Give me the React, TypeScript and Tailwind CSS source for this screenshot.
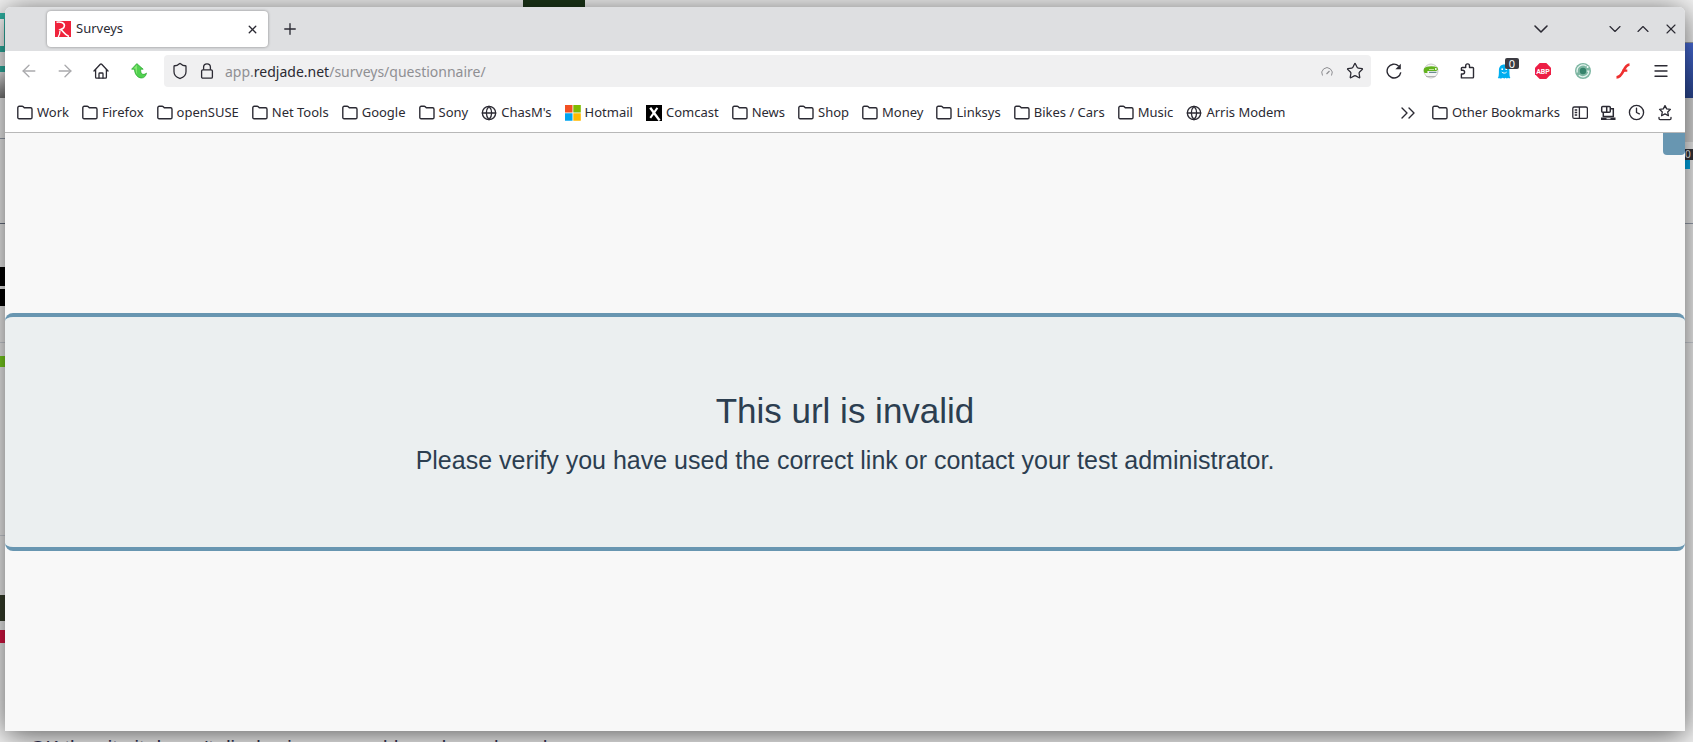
import type { ReactNode } from "react";
import {
  ArrowLeft,
  ArrowRight,
  ChevronDown,
  ChevronUp,
  ChevronsRight,
  Clock,
  Globe,
  Menu,
  Plus,
  Shield,
  Star,
  X,
} from "lucide-react";

type Bookmark = { name: string; kind: "folder" | "globe" | "microsoft" | "comcast" };

const bookmarks: Bookmark[] = [
  { name: "Work", kind: "folder" },
  { name: "Firefox", kind: "folder" },
  { name: "openSUSE", kind: "folder" },
  { name: "Net Tools", kind: "folder" },
  { name: "Google", kind: "folder" },
  { name: "Sony", kind: "folder" },
  { name: "ChasM's", kind: "globe" },
  { name: "Hotmail", kind: "microsoft" },
  { name: "Comcast", kind: "comcast" },
  { name: "News", kind: "folder" },
  { name: "Shop", kind: "folder" },
  { name: "Money", kind: "folder" },
  { name: "Linksys", kind: "folder" },
  { name: "Bikes / Cars", kind: "folder" },
  { name: "Music", kind: "folder" },
  { name: "Arris Modem", kind: "globe" },
];

function FolderIcon() {
  return (
    <svg viewBox="0 0 16 16" className="size-4 shrink-0" fill="none" stroke="currentColor" strokeWidth="1.4">
      <path d="M.8 12.400V2.700c0-.9.6-1.400 1.400-1.400h2.900c.5 0 .9.2 1.200.5l1 1h6.300c.9 0 1.400.6 1.400 1.400v8.200c0 .8-.5 1.300-1.300 1.300H2.100c-.8 0-1.300-.5-1.300-1.300z" />
    </svg>
  );
}

function MicrosoftIcon() {
  return (
    <svg viewBox="0 0 16 16" className="size-4 shrink-0">
      <path fill="#f25022" d="M0 0h7.5v7.5H0z" />
      <path fill="#7fba00" d="M8.3 0h7.5v7.5H8.3z" />
      <path fill="#00a4ef" d="M0 8.3h7.5v7.5H0z" />
      <path fill="#ffb900" d="M8.3 8.3h7.5v7.5H8.3z" />
    </svg>
  );
}

function ComcastIcon() {
  return (
    <svg viewBox="0 0 16 16" className="size-4 shrink-0">
      <path fill="#000" d="M0 0h16v16H0z" />
      <path stroke="#fff" strokeWidth="2.4" d="M4.2 2.8 13.6 15.4" />
      <path stroke="#fff" strokeWidth="2" d="M11.4 2.8 4.3 12.8" />
    </svg>
  );
}

function RedJadeIcon() {
  return (
    <svg viewBox="0 0 16 16" className="size-4 shrink-0" fill="none" stroke="#fff">
      <path fill="#ef233c" stroke="none" d="M0 0h16v16H0z" />
      <path strokeWidth="1.600" d="M1.500 1.200C5.500.5 9.400 1.500 9.400 4.600c0 2-1.600 3.300-3.800 3.900 2.600 1.200 4.200 5.700 8.400 6.900" />
      <path strokeWidth="1.300" d="M5 9.500c0 2.600-.5 4.600-1.800 6.500" />
    </svg>
  );
}

function HomeIcon() {
  return (
    <svg viewBox="0 0 16 16" className="size-4" fill="none" stroke="currentColor" strokeWidth="1.3" strokeLinecap="round" strokeLinejoin="round">
      <path d="M1 8 7.300 1.300a1 1 0 0 1 1.400 0L15 8" />
      <path d="M2.600 6.600v7.600c0 .6.3.9.9.9h9c.6 0 .9-.3.9-.9V6.600" />
      <path d="M6 15v-4.200c0-.5.3-.8.8-.8h2.400c.5 0 .8.3.8.8V15" />
    </svg>
  );
}

function UpIcon() {
  return (
    <svg viewBox="0 0 16 16" className="size-4">
      <path
        fill="#51d14f"
        stroke="#27a52c"
        strokeWidth=".7"
        strokeLinejoin="round"
        d="M5.800.6.600 6.200h2.900c.1 5.200 3.200 8.800 7.200 8.800 2.400 0 4.200-1.900 4.800-4.900-1.600 1.300-3.200 1.600-4.400.9-1.100-.7-1.500-2.300-1.500-4.800h2.600z"
      />
      <path fill="#8de878" d="M5.800 2 2.600 5.500h2c0 2.600.5 4.600 1.600 6C5.700 8.500 6 5 5.800 2z" />
    </svg>
  );
}

function LockIcon() {
  return (
    <svg viewBox="0 0 16 16" className="size-4 shrink-0" fill="none" stroke="currentColor" strokeWidth="1.3">
      <rect x="2.600" y="6.800" width="10.800" height="8.400" rx="1.300" />
      <path d="M4.600 6.800V4.200a3.400 3.400 0 0 1 6.800 0v2.600" />
    </svg>
  );
}

function GaugeIcon() {
  return (
    <svg viewBox="0 0 16 16" className="size-4" fill="none" stroke="#8f8f93">
      <path d="M3.500 12.500A5.200 5.200 0 1 1 12.500 12.500" strokeWidth="1" />
      <path d="m7.500 11 3-3" strokeWidth="1.200" />
    </svg>
  );
}

function ReloadIcon() {
  return (
    <svg viewBox="0 0 16 16" className="size-4" fill="none" stroke="currentColor" strokeWidth="1.400">
      <path d="M14.800 9.300A6.900 6.900 0 1 1 12.600 2.900" />
      <path fill="currentColor" stroke="none" d="M14.800.8v5.500H9.400z" />
    </svg>
  );
}

function SuseIcon() {
  return (
    <svg viewBox="0 0 16 16" className="size-4">
      <circle cx="8" cy="8" r="7" fill="#f5f5f5" stroke="#c8c8c8" />
      <path fill="#62b31e" d="M1 5.500C3.500 3 10 2.700 14.500 4.500l.5 2.200-1.700 1.300H5.200c-1.500 0-1.400 2 .3 2H1.600C.6 9 .5 7 1 5.500z" />
      <path stroke="#d6f0b8" strokeWidth=".8" d="M6 6.500h5" />
      <circle cx="12.800" cy="6" r=".9" fill="#fff" />
      <path stroke="#6b8d91" strokeWidth="1.300" d="M6 9.400h7.500" />
      <path stroke="#b2b2b2" strokeWidth="1" d="M3 13.500h9.500" />
    </svg>
  );
}

function PuzzleIcon() {
  return (
    <svg viewBox="0 0 16 16" className="size-4" fill="none" stroke="currentColor" strokeWidth="1.400" strokeLinejoin="round">
      <path d="M1.400 14.900V11h1.300a1.900 1.900 0 0 0 0-3.800H1.400V5.300c0-.5.3-.8.8-.8h3.500V2.800a1.900 1.900 0 0 1 3.800 0v1.700h3.200c.5 0 .8.3.8.8v8.800c0 .5-.3.8-.8.8z" />
    </svg>
  );
}

function GhostIcon() {
  return (
    <svg viewBox="0 0 16 16" className="size-4">
      <path fill="#00aef0" d="M2.700 15.200c-.7.300-1.300.2-1.900-.3.900-1.100 1.100-3.300 1.100-7.200C1.900 3.500 4 1.500 7.200 1.500s5.200 2 5.200 6.200c0 3.900.2 6.100 1 7.200-.9.500-1.500.5-2.300-.2-.9.900-1.500.9-2.500 0-.9.900-1.700.9-2.700 0-1.200.9-2 1-3.200.5z" />
      <circle cx="5.200" cy="6.200" r=".9" fill="#fff" />
      <circle cx="9.200" cy="6.200" r=".9" fill="#fff" />
      <path d="M4.800 9c1.200 1.500 3.700 1.500 4.900 0" fill="none" stroke="#fff" />
    </svg>
  );
}

function AdblockIcon() {
  return (
    <svg viewBox="0 0 16 16" className="size-4">
      <path fill="#ed1e45" d="M4.700 0h6.600L16 4.700v6.600L11.300 16H4.700L0 11.300V4.700z" />
      <text x="8" y="10.500" textAnchor="middle" fill="#fff" fontSize="7" fontWeight="700" fontFamily="Roboto, sans-serif">
        ABP
      </text>
    </svg>
  );
}

function OrbitIcon() {
  return (
    <svg viewBox="0 0 16 16" className="size-4" fill="none">
      <circle cx="8" cy="8" r="8" fill="#7db6a2" />
      <path stroke="#e4f3ee" strokeWidth="1.300" d="M11.500 3A6 6 0 0 0 2.300 9.500M3.800 12.200a6 6 0 0 0 10-4h-2" />
      <circle cx="8" cy="8" r="3.200" fill="#35836b" />
      <circle cx="12.600" cy="4" r="1" fill="#fff" />
    </svg>
  );
}

function FlashIcon() {
  return (
    <svg viewBox="0 0 16 16" className="size-4" fill="none" stroke="#ee2f2f">
      <path strokeWidth="2.600" d="M14.500 1.600C8 1.800 9 14.200 1.500 14.400" />
      <path strokeWidth="2.200" d="M7.500 7.600h4.800" />
    </svg>
  );
}

function SidebarIcon() {
  return (
    <svg viewBox="0 0 16 16" className="size-4" fill="none" stroke="currentColor" strokeWidth="1.300">
      <rect x=".8" y="2" width="14.600" height="11.400" rx="1.500" />
      <path d="M7.400 2v11.400M2.700 5h2.500M2.700 7.500h2.500M2.700 10h2.500" />
    </svg>
  );
}

function DevicesIcon() {
  return (
    <svg viewBox="0 0 16 16" className="size-4" fill="none" stroke="currentColor" strokeWidth="1.500">
      <rect x="1.700" y="1.600" width="8.600" height="5.600" rx="1" />
      <path d="M6.700 1.600v5.600M3.300 7.500v4h10V3.700h-2.400" />
      <path fill="currentColor" stroke="none" d="M1 12.500h14.500V15H1z" />
      <path stroke="#fff" strokeWidth="1" d="M6.500 13.700h4" />
    </svg>
  );
}

function BookmarkTrayIcon() {
  return (
    <svg viewBox="0 0 16 16" className="size-4" fill="none" stroke="currentColor" strokeWidth="1.300" strokeLinejoin="round" strokeLinecap="round">
      <path d="m8 .6 1.700 3.300 3.700.5-2.700 2.600.7 3.700L8 8.900l-3.400 1.800.7-3.700-2.700-2.600 3.700-.5z" />
      <path d="M2 12.300v1.200c0 .7.4 1.100 1.100 1.100h9.800c.7 0 1.100-.4 1.100-1.100v-1.200" />
    </svg>
  );
}

function BookmarkIcon({ kind }: { kind: Bookmark["kind"] }) {
  if (kind === "microsoft") return <MicrosoftIcon />;
  if (kind === "comcast") return <ComcastIcon />;
  if (kind === "globe") return <Globe className="size-4 shrink-0" strokeWidth={2} />;
  return <FolderIcon />;
}

function IconButton({ label, children, className = "" }: { label: string; children: ReactNode; className?: string }) {
  return (
    <button type="button" aria-label={label} className={`flex h-8 shrink-0 items-center justify-center ${className}`}>
      {children}
    </button>
  );
}

/* Slices of the windows that sit underneath this one */
function Backdrop() {
  return (
    <div aria-hidden="true" className="absolute inset-0 overflow-hidden bg-[#f4f4f4]">
      <div className="absolute left-0 top-[13px] h-[39px] w-[5px] border-y-[6px] border-r border-[#2fb5a5] bg-white" />
      <div className="absolute left-0 top-[66px] h-1.5 w-5 bg-[#2fb5a5]" />
      <div className="absolute left-0 top-[72px] h-[26px] w-5 bg-gradient-to-b from-[#eee] to-[#777]" />
      <div className="absolute left-0 top-[138px] h-px w-5 bg-gray-400" />
      <div className="absolute left-0 top-[223px] h-px w-5 bg-gray-500" />
      <div className="absolute left-0 top-[267px] h-[19px] w-5 bg-black" />
      <div className="absolute left-0 top-[289px] h-[17px] w-5 bg-black" />
      <div className="absolute left-0 top-[342px] h-px w-5 bg-gray-300" />
      <div className="absolute left-0 top-[356px] h-[11px] w-5 bg-[#7cd61f]" />
      <div className="absolute left-0 top-[535px] h-px w-5 bg-gray-300" />
      <div className="absolute left-0 top-[595px] h-[26px] w-5 bg-[#39402c]" />
      <div className="absolute left-0 top-[630px] h-[13px] w-5 bg-[#e21646]" />
      <div className="absolute left-[523px] top-0 h-5 w-[62px] bg-[#1c3618]" />
      <div className="absolute right-0 top-[42px] h-px w-5 bg-gray-400" />
      <div className="absolute right-0 top-[43px] h-[55px] w-5 bg-gradient-to-b from-[#4a6fe0] to-[#2b4791]" />
      <div className="absolute right-0 top-[98px] h-[44px] w-5 bg-[#dcdcdc]" />
      <div className="absolute right-0 top-[149px] h-[11px] w-2 bg-[#35353b] text-[10px] leading-[11px] text-white">0</div>
      <div className="absolute right-[3px] top-[160px] h-[9px] w-[5px] bg-[#00aef0]" />
      <div className="absolute right-0 top-[223px] h-px w-5 bg-gray-400" />
      <div className="absolute right-0 top-[342px] h-px w-5 bg-gray-300" />
      <p className="absolute left-[30px] top-[736px] whitespace-nowrap font-['Liberation_Sans',sans-serif] text-[20px] leading-6 text-[#333355]">
        OK the site it doesn't display in any would you know how do
      </p>
    </div>
  );
}

export default function App() {
  return (
    <div className="relative flex h-screen overflow-hidden pt-[7px] pr-2 pb-[11px] pl-[5px] font-['Noto_Sans',sans-serif] text-[13px] text-[#2b2a33]">
      <Backdrop />
      <div className="relative flex min-w-0 flex-1 flex-col overflow-hidden rounded-t-md bg-[#f8f8f8] shadow-[0_4px_30px_rgba(0,0,0,0.65)]">
        {/* Tab strip */}
        <header className="flex h-11 shrink-0 items-center bg-[#dedfe1]">
          <div className="ml-[42px] flex h-9 w-[221px] items-center gap-[5px] rounded bg-white px-2 shadow-[0_0_3px_rgba(0,0,0,0.4)]">
            <RedJadeIcon />
            <span className="flex-1">Surveys</span>
            <IconButton label="Close tab" className="w-4">
              <X className="size-[13px]" strokeWidth={2.5} />
            </IconButton>
          </div>
          <IconButton label="New tab" className="ml-3 w-5">
            <Plus className="size-[18px]" strokeWidth={1.8} />
          </IconButton>
          <div className="ml-auto flex items-center">
            <IconButton label="List all tabs" className="mr-[46px] w-7">
              <ChevronDown className="size-6" strokeWidth={1.6} />
            </IconButton>
            <IconButton label="Minimize" className="w-7">
              <ChevronDown className="size-5" strokeWidth={1.4} />
            </IconButton>
            <IconButton label="Maximize" className="w-7">
              <ChevronUp className="size-5" strokeWidth={1.4} />
            </IconButton>
            <IconButton label="Close" className="w-7">
              <X className="size-4" strokeWidth={1.7} />
            </IconButton>
          </div>
        </header>

        {/* Navigation bar */}
        <div className="flex h-10 shrink-0 items-center bg-white pr-1.5">
          <div className="flex pl-1.5">
            <IconButton label="Back" className="w-9 text-[#aaaaad]">
              <ArrowLeft className="size-5" strokeWidth={1.6} />
            </IconButton>
            <IconButton label="Forward" className="w-9 text-[#aaaaad]">
              <ArrowRight className="size-5" strokeWidth={1.6} />
            </IconButton>
            <IconButton label="Home" className="w-9">
              <HomeIcon />
            </IconButton>
            <IconButton label="Up one level" className="w-10">
              <UpIcon />
            </IconButton>
          </div>
          <div className="ml-[5px] flex h-8 min-w-0 flex-1 items-center rounded bg-[#f0f0f1] pr-0.5 pl-[7px]">
            <Shield className="size-[18px] shrink-0" strokeWidth={1.7} />
            <span className="ml-2.5 flex">
              <LockIcon />
            </span>
            <div className="ml-2.5 flex-1 truncate text-[14px] text-[#8f8f93]">
              app.<span className="text-[#2b2a33]">redjade.net</span>/surveys/questionnaire/
            </div>
            <IconButton label="Page speed" className="w-7">
              <GaugeIcon />
            </IconButton>
            <IconButton label="Bookmark this page" className="w-7">
              <Star className="size-[18px]" strokeWidth={1.7} />
            </IconButton>
          </div>
          <div className="ml-[5px] flex">
            <IconButton label="Reload" className="w-9">
              <ReloadIcon />
            </IconButton>
            <IconButton label="openSUSE" className="w-[37px]">
              <SuseIcon />
            </IconButton>
            <IconButton label="Extensions" className="w-[37px]">
              <PuzzleIcon />
            </IconButton>
            <IconButton label="Ghostery" className="relative w-[37px]">
              <GhostIcon />
              <span className="absolute top-[3px] right-1 h-[11px] w-3.5 rounded-[2px] bg-[#3b3b42] text-[11px] leading-[11px] text-white">
                0
              </span>
            </IconButton>
            <IconButton label="Adblock Plus" className="w-10">
              <AdblockIcon />
            </IconButton>
            <IconButton label="Privacy" className="w-10">
              <OrbitIcon />
            </IconButton>
            <IconButton label="Flash" className="w-10">
              <FlashIcon />
            </IconButton>
            <IconButton label="Open menu" className="w-9">
              <Menu className="size-[18px]" strokeWidth={1.8} />
            </IconButton>
          </div>
        </div>

        {/* Bookmarks bar */}
        <div className="flex h-[42px] shrink-0 items-center border-b border-[#b8b8b8] bg-white px-3 pt-0.5">
          <nav className="flex items-center gap-[13px]">
            {bookmarks.map((item) => (
              <a key={item.name} href="#" className="flex items-center gap-1 whitespace-nowrap">
                <BookmarkIcon kind={item.kind} />
                {item.name}
              </a>
            ))}
          </nav>
          <div className="ml-auto flex items-center gap-3">
            <IconButton label="More bookmarks">
              <ChevronsRight className="size-6" strokeWidth={1.4} />
            </IconButton>
            <a href="#" className="flex items-center gap-1 whitespace-nowrap">
              <FolderIcon />
              Other Bookmarks
            </a>
            <IconButton label="Sidebars">
              <SidebarIcon />
            </IconButton>
            <IconButton label="Synced devices">
              <DevicesIcon />
            </IconButton>
            <IconButton label="History">
              <Clock className="size-[17px]" strokeWidth={1.9} />
            </IconButton>
            <IconButton label="Bookmarks menu">
              <BookmarkTrayIcon />
            </IconButton>
          </div>
        </div>

        {/* Page */}
        <main className="relative flex flex-1 flex-col justify-center font-['Liberation_Sans',sans-serif] text-[#2c3e50]">
          <div className="absolute top-0 right-0 size-[22px] rounded-b bg-[#6896b1]" />
          <section className="rounded-lg border-y-4 border-[#6896b1] bg-[#ebeff0] pt-[69px] pb-[63px] text-center">
            <h1 className="text-[35px] leading-[50px]">This url is invalid</h1>
            <p className="text-[25px] leading-[48px]">
              Please verify you have used the correct link or contact your test administrator.
            </p>
          </section>
        </main>
      </div>
    </div>
  );
}
